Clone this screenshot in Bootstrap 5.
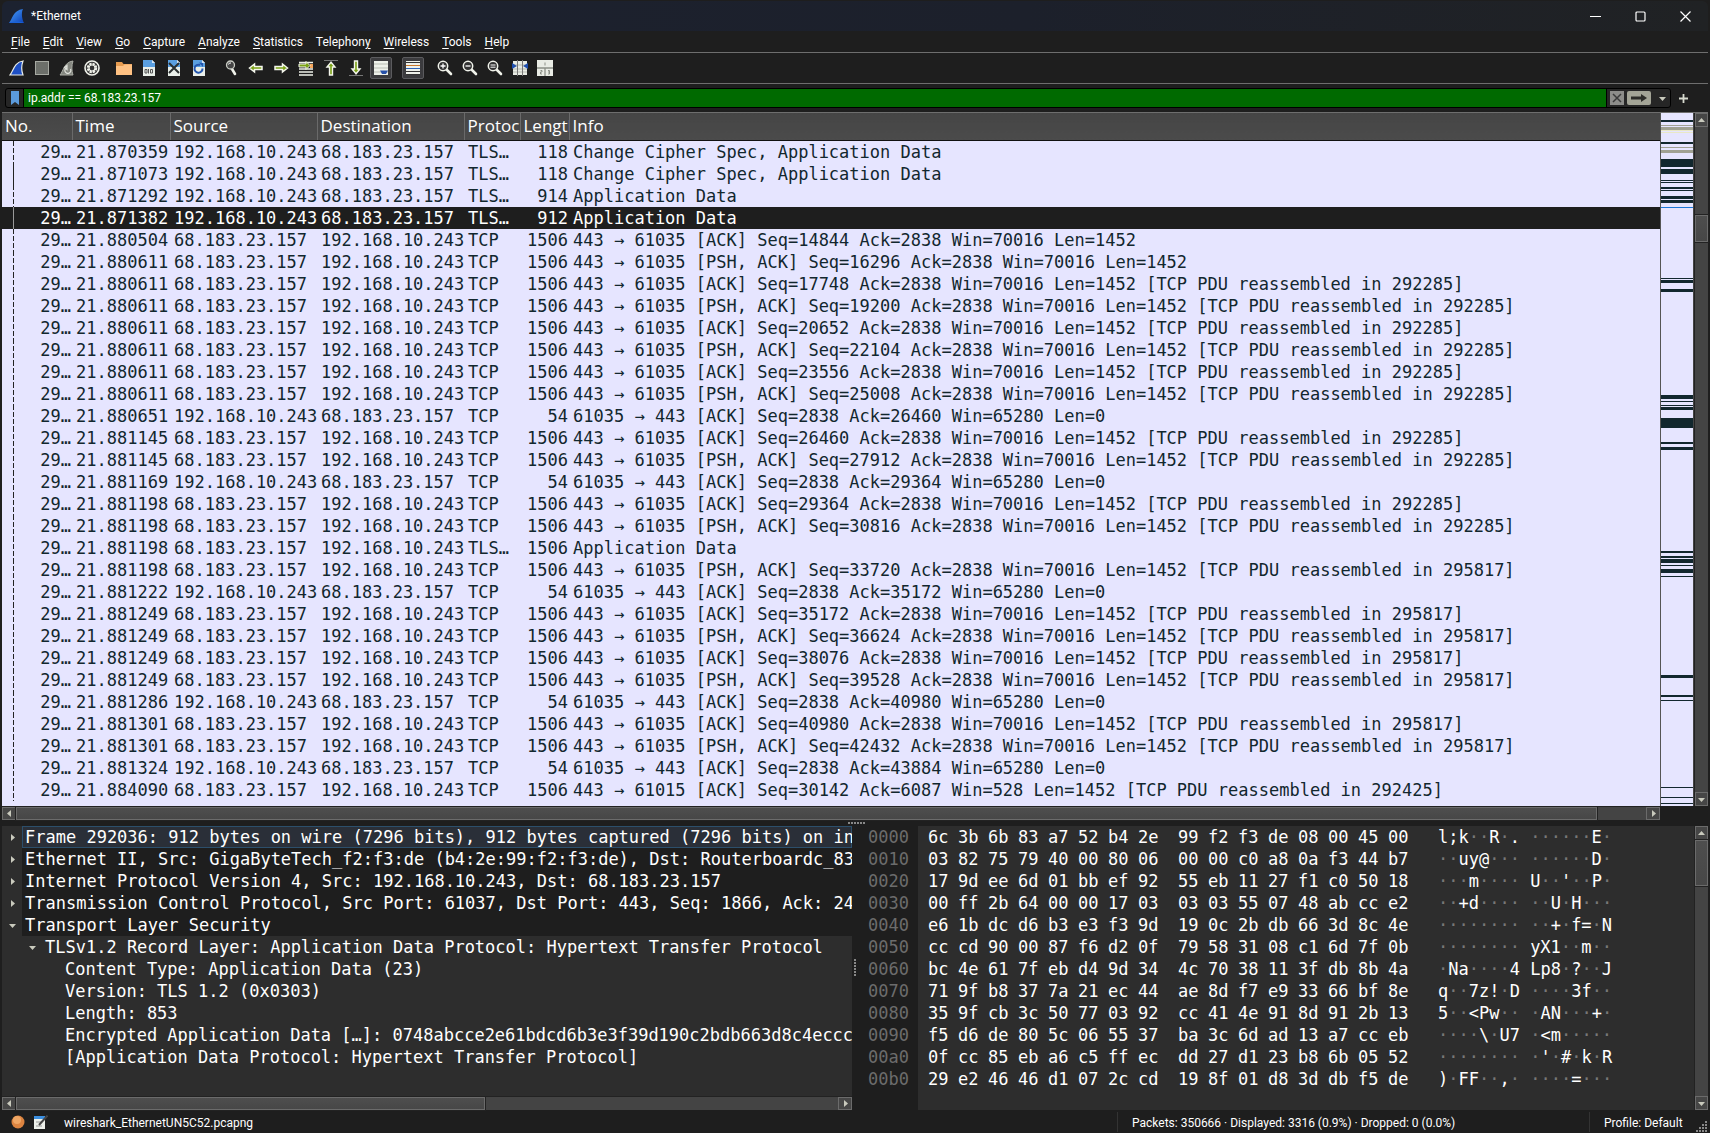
<!DOCTYPE html>
<html lang="en">
<head>
<meta charset="utf-8">
<meta name="viewport" content="width=device-width, initial-scale=1">
<title>*Ethernet</title>
<link href="https://cdn.jsdelivr.net/npm/bootstrap@5.3.0/dist/css/bootstrap.min.css" rel="stylesheet">
<style>
:root{--ui:Roboto,"Open Sans",sans-serif;--fixed:"DejaVu Sans Mono","Liberation Mono",monospace;--panel:#2d2d2d;--chrome:#1e1e1e;--ink:#12272e;--list:#e6e5ff}
body{font-family:var(--ui);font-size:12px;line-height:16px;color:#fff;background:#2c2e31;overflow:hidden}
button{font:inherit;color:inherit}
.app{height:100vh;padding:1px 2px 0;background:var(--chrome)}
.titlebar{height:30px;background:linear-gradient(90deg,#1c2230,#1c202b 60%,#202224);border-radius:6px 6px 0 0;padding-left:7px}
.titlebar .caption-text{margin-left:6px;flex:1}
.win-btn{width:45px;height:30px;background:none;border:0;padding:0;display:grid;place-items:center}
.menus{height:21px;padding-left:3px}
.menus a{color:#fff;text-decoration:none;padding:3px 7px 2px 6px}
.menus u{text-underline-offset:2px}
.tools{height:31px;border-top:1px solid #6e6e6e;padding-left:2px;gap:7px}
.tools .grp{display:flex}
.tool{width:25px;height:24px;padding:0;border:0;background:none;display:grid;place-items:center}
.tool.on svg{box-sizing:content-box;padding:2px;background:#3b3b3e;border:1px solid #5b5b5e;border-radius:2px}
.filter{height:30px;border-top:1px solid #6e6e6e;border-bottom:1px solid #6e6e6e;padding-left:3px;padding-right:13px}
.fbox{height:20px;flex:1;border:1px solid #000;border-radius:3px;background:#262626;display:flex;align-items:center;min-width:0}
.fbox input{flex:1;min-width:0;height:18px;border:0;border-left:1px solid #000;border-right:1px solid #000;background:#006a00;color:#fff;font-size:12px;padding:0 4px;outline:0}
.fbtn{border:0;padding:0;background:none;display:grid;place-items:center}
.bm{width:17px}
.clr{width:14px;height:14px;background:#8d8d8a;margin-left:3px}
.apply{width:24px;height:14px;background:#a3a496;border-radius:2px;margin:0 3px}
.drop{width:16px}
.plus{width:24px;flex:none}
.packets{flex:1 1 0;min-height:0;color:var(--ink)}
.list{flex:1;min-width:0;overflow:hidden;background:var(--list)}
.pk{table-layout:fixed;width:100%;border-collapse:collapse;font:17px/22px var(--fixed)}
.pk th{height:27px;background:linear-gradient(#454545,#4b4b4b);border-right:1px solid #6a6a6a;border-bottom:1px solid #111;color:#fff;font:17px/26px "Open Sans",sans-serif;padding:0 0 0 3px;white-space:nowrap;overflow:hidden}
.pk th:last-child{border-right:0}
.pk td{height:22px;padding:0 1px 0 4px;white-space:pre;overflow:hidden}
.pk .num{text-align:right}
.pk .flow{background:linear-gradient(#222,#222) 11px 0/1px 100% no-repeat}
.pk .gap .flow{background:repeating-linear-gradient(#222 0 5px,transparent 5px 7px) 11px 0/1px 100% no-repeat}
.pk tr.sel{background:var(--chrome);color:#fff}
.pk tr.sel .flow{background-image:linear-gradient(#999,#999)}
.c-no{width:70px}.c-time{width:98px}.c-addr{width:147px}.c-proto{width:56px}.c-len{width:49px}
.map{width:34px;border-left:1px solid #555;border-right:1px solid #444;background:var(--list)}
.map svg{display:block;width:100%;height:100%}
.sb{background:#444;border:1px solid #222;flex:none;display:flex}
.sb.v{width:14px;flex-direction:column;border-width:0 0 0 1px}
.sb.h{height:14px;border-width:1px 0 0}
.sb button{border:1px solid #6b6b6b;background:#464646;padding:0;flex:none;display:grid;place-items:center}
.sb.v button{width:13px;height:14px}
.sb.h button{width:14px;height:13px}
.sb .track{flex:1;display:flex;min-width:0;min-height:0}
.sb.v .track{flex-direction:column}
.thumb{background:linear-gradient(#4e4e4e,#474747);border:1px solid #6b6b6b;box-shadow:0 0 0 1px #222}
.t-list-v{height:27px;margin-top:88px}.t-hex-v{height:46px}
.t-list-h{width:97%}.t-tree-h{width:57%}
.corner{width:48px}
.split{height:6px;padding-left:846px}
.dots{width:18px;height:2px;background:repeating-linear-gradient(90deg,#888 0 2px,transparent 2px 3px)}
.lower{height:284px}
.tree{width:850px;flex:none;background:var(--panel);font:17px/22px var(--fixed)}
.tree ul{list-style:none;margin:0;padding:0;flex:1;overflow:hidden}
.tree li{height:22px;display:flex;white-space:pre}
.tree .tw{width:20px;flex:none;display:grid;place-items:center}
.tree .txt{flex:1;min-width:0;overflow:hidden;padding-left:3px}
.tree .top .txt{background:var(--chrome)}
.tree .cur .txt{background:#2a2f38;box-shadow:inset 0 0 0 1px #2c4f6b}
.tree .l2{padding-left:20px}.tree .l3{padding-left:40px}
.vsplit{width:6px;flex:none}
.vsplit .dots{width:2px;height:18px;background:repeating-linear-gradient(#888 0 2px,transparent 2px 3px)}
.hex{flex:1;min-width:0;background:linear-gradient(90deg,#1e1e1e 60px,var(--panel) 60px);overflow:hidden}
.hx{table-layout:fixed;border-collapse:collapse;font:17px/22px var(--fixed);width:760px}
.hx td,.hx th{padding:0;height:22px;white-space:pre;font-weight:400}
.hx .off{width:70px;padding-left:10px;color:#6c6c6c}
.hx .by{width:30px}.hx .mid{width:40px}
.hx .asc{padding-left:20px}
.hx i{font-style:normal;color:#777}
.status{height:23px}
.status .ico{margin-left:9px}
.status .cap{margin-left:16px;margin-top:2px}
.stat-a,.stat-b{border-left:1px solid #333;padding-left:14px;padding-top:3px;height:20px}
.stat-a{width:472px}.stat-b{width:119px;position:relative}
.grip{position:absolute;right:0;bottom:0}
</style>
</head>
<body>
<svg width="0" height="0" class="position-absolute" aria-hidden="true">
<defs>
<linearGradient id="gfin" x1="0" x2="1" y1="0" y2="1"><stop offset="0" stop-color="#4aa3ff"/><stop offset="1" stop-color="#0b3fb5"/></linearGradient>
<symbol id="up" viewBox="0 0 7 7"><path d="M0 5 3.500 1 7 5z" fill="#c9cabd"/></symbol>
<symbol id="dn" viewBox="0 0 7 7"><path d="M0 2h7L3.500 6z" fill="#c9cabd"/></symbol>
<symbol id="lf" viewBox="0 0 7 7"><path d="M5 0v7L1 3.500z" fill="#c9cabd"/></symbol>
<symbol id="rt" viewBox="0 0 7 7"><path d="M2 0v7l4-3.500z" fill="#c9cabd"/></symbol>
<symbol id="doc" viewBox="0 0 16 16"><path d="M2 0h9l3 3v13H2z" fill="#e9efe9"/><path d="M2 0h9v3h3v4H2z" fill="#5a9fe0"/><path d="M11 0v3h3z" fill="#d5e6f5"/></symbol>
<symbol id="glass" viewBox="0 0 16 16"><path d="m9 9 5 5" stroke="#f0f2ea" stroke-width="2.600" stroke-linecap="round"/><circle cx="6" cy="6" r="4.700" fill="#333" stroke="#f0f2ea" stroke-width="1.500"/></symbol>
<symbol id="arr" viewBox="0 0 16 16"><path d="M14.500 8 9.500 4v2.500H2v3h7.500V12z" fill="#7aa116" stroke="#f4f6ec" stroke-width="1.500"/></symbol>
</defs>
</svg>
<div class="app d-flex flex-column">
  <header class="titlebar d-flex align-items-center">
    <svg width="16" height="16" viewBox="0 0 16 16"><path d="M0 15C3 12 4 2 14 1c-2 4-1 10 1 14z" fill="url(#gfin)"/><path d="M0 15c4-2 11-2 15 0z" fill="#1b62d8"/></svg>
    <span class="caption-text">*Ethernet</span>
    <button class="win-btn" aria-label="Minimize"><svg width="11" height="11"><path d="M0 5.500h11" stroke="#fff"/></svg></button>
    <button class="win-btn" aria-label="Maximize"><svg width="11" height="11"><rect x="1" y="1" width="9" height="9" rx="1" fill="none" stroke="#fff" stroke-width="1.200"/></svg></button>
    <button class="win-btn" aria-label="Close"><svg width="11" height="11"><path d="m.5.5 10 10m0-10-10 10" stroke="#fff" stroke-width="1.200"/></svg></button>
  </header>
  <nav class="menus d-flex align-items-center">
    <a href="#"><u>F</u>ile</a><a href="#"><u>E</u>dit</a><a href="#"><u>V</u>iew</a><a href="#"><u>G</u>o</a><a href="#"><u>C</u>apture</a><a href="#"><u>A</u>nalyze</a><a href="#"><u>S</u>tatistics</a><a href="#">Telephon<u>y</u></a><a href="#"><u>W</u>ireless</a><a href="#"><u>T</u>ools</a><a href="#"><u>H</u>elp</a>
  </nav>
  <div class="tools d-flex align-items-center" role="toolbar">
    <div class="grp">
      <button class="tool" aria-label="Start capture"><svg width="16" height="16"><path d="M1 15C4 12 5 2 14 1c-1.500 4-1.500 10 0 14z" fill="#1d4fc4" stroke="#e8ece6" stroke-width="1.200"/></svg></button>
      <button class="tool" aria-label="Stop capture"><svg width="16" height="16"><rect x="1.500" y="1.500" width="13" height="13" fill="#6c6f6a" stroke="#a6a9a2"/></svg></button>
      <button class="tool" aria-label="Restart capture"><svg width="16" height="16"><path d="M1 15C4 12 5 2 14 1c-1.500 4-1.500 10 0 14z" fill="#83867f" stroke="#a9aca4"/><path d="M8 7.500a3 3 0 1 0 3.500 1.500M8 5.500v4l-2.500-2z" fill="none" stroke="#e0e2dc" stroke-width="1.200"/></svg></button>
      <button class="tool" aria-label="Capture options"><svg width="16" height="16"><circle cx="8" cy="8" r="7" fill="#333" stroke="#f0f2ea" stroke-width="1.600"/><circle cx="8" cy="8" r="4.200" fill="none" stroke="#f0f2ea" stroke-width="2" stroke-dasharray="2.400 .9"/><circle cx="8" cy="8" r="3" fill="none" stroke="#f0f2ea" stroke-width="1.200"/></svg></button>
    </div>
    <div class="grp">
      <button class="tool" aria-label="Open"><svg width="16" height="16"><path d="M0 2h6l1.500 2H16v11H0z" fill="#e79c50"/><path d="M0 6h7l1.500-1.500H16V15H0z" fill="#ffc283"/></svg></button>
      <button class="tool" aria-label="Save"><svg width="16" height="16"><use href="#doc"/><path d="M4 9.500h2v3.500H4zM7.500 9v4.500M9.500 9.500h2v3.500h-2z" fill="none" stroke="#555"/></svg></button>
      <button class="tool" aria-label="Close file"><svg width="16" height="16"><use href="#doc"/><path d="m3 3 10 10m0-10L3 13" stroke="#2a2f2f" stroke-width="2"/></svg></button>
      <button class="tool" aria-label="Reload"><svg width="16" height="16"><use href="#doc"/><path d="M11.500 8.500A4 4 0 1 1 9 5" fill="none" stroke="#2456ad" stroke-width="2"/><path d="M8 2.500 12 3v4z" fill="#2456ad"/></svg></button>
    </div>
    <div class="grp">
      <button class="tool" aria-label="Find"><svg width="16" height="16"><path d="m9 9 3 5" stroke="#f0f2ea" stroke-width="2.600" stroke-linecap="round"/><circle cx="7.500" cy="5" r="4" fill="#444" stroke="#c9ccc4" stroke-width="1.300"/><path d="M5.500 4.500A2 2 0 0 1 8 3" stroke="#fff" fill="none"/></svg></button>
      <button class="tool" aria-label="Back"><svg width="16" height="16"><use href="#arr" transform="matrix(-1 0 0 1 16 0)"/></svg></button>
      <button class="tool" aria-label="Forward"><svg width="16" height="16"><use href="#arr"/></svg></button>
      <button class="tool" aria-label="Go to packet"><svg width="16" height="16"><path d="M1 2.500h14M1 9h14M1 12h14M1 15h14" stroke="#f0f2ea" stroke-width="1.700"/><path d="M12 4h3v4h-3z" fill="#f5a65b"/><path d="M12 5.500 8 1.500v2.500H1v3h7v2.500z" fill="#7aa116" stroke="#f4f6ec"/></svg></button>
      <button class="tool" aria-label="First packet"><svg width="16" height="16"><path d="M1 .5h14" stroke="#777"/><path d="M8 2.200 4 7h2.500v8h3V7H12z" fill="#7aa116" stroke="#f4f6ec" stroke-width="1.400"/></svg></button>
      <button class="tool" aria-label="Last packet"><svg width="16" height="16"><path d="M1 15.500h14" stroke="#777"/><path d="M8 13.800 4 9h2.500V1h3v8H12z" fill="#7aa116" stroke="#f4f6ec" stroke-width="1.400"/></svg></button>
      <button class="tool on" aria-label="Auto scroll"><svg width="16" height="16"><path d="M1 1h14v14H1z" fill="#eef1ea"/><path d="M1 4h14M1 8h14M1 12h14" stroke="#b9bdb4"/><path d="M7 10.500h8L13 14H9z" fill="#2650a8"/></svg></button>
    </div>
    <div class="grp">
      <button class="tool on" aria-label="Colorize"><svg width="16" height="16"><path d="M1 1h14v14H1z" fill="#eef1ea"/><path d="M1 2.500h14M1 11.500h14M1 14.500h14" stroke="#333"/><path d="M1 5.500h14" stroke="#c9772b"/><path d="M1 8.500h14" stroke="#2c62b5"/></svg></button>
    </div>
    <div class="grp">
      <button class="tool" aria-label="Zoom in"><svg width="16" height="16"><use href="#glass"/><path d="M3.500 6h5M6 3.500v5" stroke="#fff" stroke-width="1.300"/></svg></button>
      <button class="tool" aria-label="Zoom out"><svg width="16" height="16"><use href="#glass"/><path d="M3.500 6h5" stroke="#fff" stroke-width="1.300"/></svg></button>
      <button class="tool" aria-label="Normal size"><svg width="16" height="16"><use href="#glass"/><path d="M3.500 5h5M3.500 7.200h5" stroke="#fff"/></svg></button>
      <button class="tool" aria-label="Resize columns"><svg width="16" height="16"><path d="M1 1h14v14H1z" fill="#e9ece5"/><path d="M1 5h14M1 9h14M1 12h14" stroke="#b5b9b0"/><path d="M5.500 0v16M10.500 0v16" stroke="#777"/><path d="m0 3 5 3-5 3zM16 3l-5 3 5 3z" fill="#1f4fae"/></svg></button>
      <button class="tool" aria-label="Layout"><svg width="16" height="16"><path d="M0 0h16v16H0z" fill="#e9ece5"/><path d="M0 8h16M8 8v8" stroke="#8b8f87" stroke-width="1.300"/><path d="M8 2.500v3M3.500 10.500h1.500v1.500H3.500v2H5M11 10.500h1.500v3.500H11M11 12h1.500" fill="none" stroke="#8b8f87"/></svg></button>
    </div>
  </div>
  <div class="filter d-flex align-items-center">
    <div class="fbox">
      <button class="fbtn bm" aria-label="Bookmark"><svg width="8" height="14"><path d="M0 0h8v14l-4-3-4 3z" fill="#5b9bdc"/></svg></button>
      <input type="text" aria-label="Display filter" value="ip.addr == 68.183.23.157">
      <button class="fbtn clr" aria-label="Clear"><svg width="10" height="10"><path d="m1 1 8 8m0-8L1 9" stroke="#3a3a3a" stroke-width="1.500"/></svg></button>
      <button class="fbtn apply" aria-label="Apply"><svg width="16" height="8"><path d="M0 2.500h10V0l6 4-6 4V5.500H0z" fill="#2c2c28"/></svg></button>
      <button class="fbtn drop" aria-label="History"><svg width="7" height="7"><use href="#dn"/></svg></button>
    </div>
    <button class="fbtn plus" aria-label="Add filter button"><svg width="9" height="9"><path d="M4.500 0v9M0 4.500h9" stroke="#d7dacf" stroke-width="1.800"/></svg></button>
  </div>
  <main class="packets d-flex">
    <div class="list">
      <table class="pk">
        <colgroup><col class="c-no"><col class="c-time"><col class="c-addr"><col class="c-addr"><col class="c-proto"><col class="c-len"><col></colgroup>
        <thead><tr><th>No.</th><th>Time</th><th>Source</th><th>Destination</th><th>Protoc</th><th>Lengtl</th><th>Info</th></tr></thead>
        <tbody id="packets"></tbody>
      </table>
    </div>
    <div class="map"><svg id="minimap" viewBox="0 0 32 693" preserveAspectRatio="none" shape-rendering="crispEdges"></svg></div>
    <div class="sb v"><button aria-label="Scroll up"><svg width="7" height="7"><use href="#up"/></svg></button><div class="track"><div class="thumb t-list-v"></div></div><button aria-label="Scroll down"><svg width="7" height="7"><use href="#dn"/></svg></button></div>
  </main>
  <div class="d-flex">
    <div class="sb h flex-fill"><button aria-label="Scroll left"><svg width="7" height="7"><use href="#lf"/></svg></button><div class="track"><div class="thumb t-list-h"></div></div><button aria-label="Scroll right"><svg width="7" height="7"><use href="#rt"/></svg></button></div>
    <div class="corner"></div>
  </div>
  <div class="split d-flex align-items-center"><div class="dots"></div></div>
  <section class="lower d-flex">
    <div class="tree d-flex flex-column">
      <ul>
        <li class="top cur"><span class="tw"><svg width="7" height="7"><use href="#rt"/></svg></span><span class="txt">Frame 292036: 912 bytes on wire (7296 bits), 912 bytes captured (7296 bits) on inte</span></li>
        <li class="top"><span class="tw"><svg width="7" height="7"><use href="#rt"/></svg></span><span class="txt">Ethernet II, Src: GigaByteTech_f2:f3:de (b4:2e:99:f2:f3:de), Dst: Routerboardc_83:a</span></li>
        <li class="top"><span class="tw"><svg width="7" height="7"><use href="#rt"/></svg></span><span class="txt">Internet Protocol Version 4, Src: 192.168.10.243, Dst: 68.183.23.157</span></li>
        <li class="top"><span class="tw"><svg width="7" height="7"><use href="#rt"/></svg></span><span class="txt">Transmission Control Protocol, Src Port: 61037, Dst Port: 443, Seq: 1866, Ack: 2464</span></li>
        <li class="top"><span class="tw"><svg width="7" height="7"><use href="#dn"/></svg></span><span class="txt">Transport Layer Security</span></li>
        <li class="l2"><span class="tw"><svg width="7" height="7"><use href="#dn"/></svg></span><span class="txt">TLSv1.2 Record Layer: Application Data Protocol: Hypertext Transfer Protocol</span></li>
        <li class="l3"><span class="tw"></span><span class="txt">Content Type: Application Data (23)</span></li>
        <li class="l3"><span class="tw"></span><span class="txt">Version: TLS 1.2 (0x0303)</span></li>
        <li class="l3"><span class="tw"></span><span class="txt">Length: 853</span></li>
        <li class="l3"><span class="tw"></span><span class="txt">Encrypted Application Data […]: 0748abcce2e61bdcd6b3e3f39d190c2bdb663d8c4ecccd9</span></li>
        <li class="l3"><span class="tw"></span><span class="txt">[Application Data Protocol: Hypertext Transfer Protocol]</span></li>
      </ul>
      <div class="sb h"><button aria-label="Scroll left"><svg width="7" height="7"><use href="#lf"/></svg></button><div class="track"><div class="thumb t-tree-h"></div></div><button aria-label="Scroll right"><svg width="7" height="7"><use href="#rt"/></svg></button></div>
    </div>
    <div class="vsplit d-flex align-items-center justify-content-center"><div class="dots"></div></div>
    <div class="hex"><table class="hx"><tbody id="bytes"></tbody></table></div>
    <div class="sb v"><button aria-label="Scroll up"><svg width="7" height="7"><use href="#up"/></svg></button><div class="track"><div class="thumb t-hex-v"></div></div><button aria-label="Scroll down"><svg width="7" height="7"><use href="#dn"/></svg></button></div>
  </section>
  <footer class="status d-flex align-items-center">
    <svg class="ico" width="14" height="14"><circle cx="7" cy="7" r="6.500" fill="#dd8440"/><circle cx="6" cy="5" r="4" fill="#f0a765"/></svg>
    <svg class="ico" width="14" height="14"><path d="M0 1h11v13H0z" fill="#edf0ea"/><path d="M0 1h11v3H0z" fill="#3c8fe0"/><path d="M2 7h6M2 11h6" stroke="#999"/><path d="M13.500.5 5 10" stroke="#444" stroke-width="2"/></svg>
    <span class="cap flex-fill">wireshark_EthernetUN5C52.pcapng</span>
    <span class="stat-a">Packets: 350666 · Displayed: 3316 (0.9%) · Dropped: 0 (0.0%)</span>
    <span class="stat-b">Profile: Default
      <svg class="grip" width="12" height="12"><path d="M9 2h2M6 5h5M3 8h8M0 11h11" stroke="#888" stroke-width="2" stroke-dasharray="2 1"/></svg>
    </span>
  </footer>
</div>
<script src="https://cdn.jsdelivr.net/npm/bootstrap@5.3.0/dist/js/bootstrap.bundle.min.js"></script>
<script>
const local = '192.168.10.243', remote = '68.183.23.157';
// time, direction (o = outgoing, i = incoming), length, info
const app = 'Application Data';
const seg = (flags, seq, re, tail = 'Ack=2838 Win=70016 Len=1452', port = 61035) =>
  `443 → ${port} [${flags}] Seq=${seq} ${tail}` + (re ? ` [TCP PDU reassembled in ${re}]` : '');
const ack = n => `61035 → 443 [ACK] Seq=2838 Ack=${n} Win=65280 Len=0`;
const rows = [
  ['21.870359','o',118,'Change Cipher Spec, ' + app],
  ['21.871073','o',118,'Change Cipher Spec, ' + app],
  ['21.871292','o',914,app],
  ['21.871382','o',912,app],
  ['21.880504','i',1506,seg('ACK',14844)],
  ['21.880611','i',1506,seg('PSH, ACK',16296)],
  ['21.880611','i',1506,seg('ACK',17748,292285)],
  ['21.880611','i',1506,seg('PSH, ACK',19200,292285)],
  ['21.880611','i',1506,seg('ACK',20652,292285)],
  ['21.880611','i',1506,seg('PSH, ACK',22104,292285)],
  ['21.880611','i',1506,seg('ACK',23556,292285)],
  ['21.880611','i',1506,seg('PSH, ACK',25008,292285)],
  ['21.880651','o',54,ack(26460)],
  ['21.881145','i',1506,seg('ACK',26460,292285)],
  ['21.881145','i',1506,seg('PSH, ACK',27912,292285)],
  ['21.881169','o',54,ack(29364)],
  ['21.881198','i',1506,seg('ACK',29364,292285)],
  ['21.881198','i',1506,seg('PSH, ACK',30816,292285)],
  ['21.881198','i',1506,app],
  ['21.881198','i',1506,seg('PSH, ACK',33720,295817)],
  ['21.881222','o',54,ack(35172)],
  ['21.881249','i',1506,seg('ACK',35172,295817)],
  ['21.881249','i',1506,seg('PSH, ACK',36624,295817)],
  ['21.881249','i',1506,seg('ACK',38076,295817)],
  ['21.881249','i',1506,seg('PSH, ACK',39528,295817)],
  ['21.881286','o',54,ack(40980)],
  ['21.881301','i',1506,seg('ACK',40980,295817)],
  ['21.881301','i',1506,seg('PSH, ACK',42432,295817)],
  ['21.881324','o',54,ack(43884)],
  ['21.884090','i',1506,seg('ACK',30142,292425,'Ack=6087 Win=528 Len=1452',61015)]
];
document.getElementById('packets').innerHTML = rows.map(([t, d, len, info], i) => {
  const tls = info.endsWith(app);
  const cls = i === 3 ? 'sel' : (i === 1 ? '' : 'gap');
  return `<tr class="${cls}"><td class="num flow">29…</td><td>${t}</td><td>${d === 'o' ? local : remote}</td><td>${d === 'o' ? remote : local}</td><td>${tls ? 'TLS…' : 'TCP'}</td><td class="num">${len}</td><td>${info}</td></tr>`;
}).join('');

// bands of the overview strip: top, height, colour
const dark = '#12272e', grey = '#a0a193', pale = '#e9e8c6';
const bands = [[7,2],[12,1,grey],[14,3,grey],[17,1,pale],[19,1,pale],[29,2],[34,1,grey],[37,3,grey],[46,8],[56,5],[67,1],[69,1],[74,2],[77,1],[83,3],[87,3],[94,1,'#1b77d8'],
  [165,1],[167,3],[176,3],[282,4],[288,1],[292,1],[294,3],[305,10],[329,2],[334,3],[438,2],[443,2],[446,4],[452,1],[456,4],[463,1],[562,3],[582,2],[587,1],[674,1],[684,1],[690,1]];
document.getElementById('minimap').innerHTML = bands.map(([y, h, c]) => `<rect x="0" y="${y}" width="32" height="${h}" fill="${c || dark}"/>`).join('');

const dump = [
  ['6c 3b 6b 83 a7 52 b4 2e 99 f2 f3 de 08 00 45 00','l;k··R·. ······E·'],
  ['03 82 75 79 40 00 80 06 00 00 c0 a8 0a f3 44 b7','··uy@··· ······D·'],
  ['17 9d ee 6d 01 bb ef 92 55 eb 11 27 f1 c0 50 18',"···m···· U··'··P·"],
  ['00 ff 2b 64 00 00 17 03 03 03 55 07 48 ab cc e2','··+d···· ··U·H···'],
  ['e6 1b dc d6 b3 e3 f3 9d 19 0c 2b db 66 3d 8c 4e','········ ··+·f=·N'],
  ['cc cd 90 00 87 f6 d2 0f 79 58 31 08 c1 6d 7f 0b','········ yX1··m··'],
  ['bc 4e 61 7f eb d4 9d 34 4c 70 38 11 3f db 8b 4a','·Na····4 Lp8·?··J'],
  ['71 9f b8 37 7a 21 ec 44 ae 8d f7 e9 33 66 bf 8e','q··7z!·D ····3f··'],
  ['35 9f cb 3c 50 77 03 92 cc 41 4e 91 8d 91 2b 13','5··<Pw·· ·AN···+·'],
  ['f5 d6 de 80 5c 06 55 37 ba 3c 6d ad 13 a7 cc eb','····\\·U7 ·<m·····'],
  ['0f cc 85 eb a6 c5 ff ec dd 27 d1 23 b8 6b 05 52',"········ ·'·#·k·R"],
  ['29 e2 46 46 d1 07 2c cd 19 8f 01 d8 3d db f5 de',')·FF··,· ····=···']
];
document.getElementById('bytes').innerHTML = dump.map(([hex, asc], i) => {
  const off = '00' + i.toString(16) + '0';
  const cells = hex.split(' ').map((b, k) => `<td class="${k === 7 ? 'mid' : 'by'}">${b}</td>`).join('');
  const text = asc.replace(/</g, '&lt;').replace(/·+/g, m => `<i>${m}</i>`);
  return `<tr><th class="off" scope="row">${off}</th>${cells}<td class="asc">${text}</td></tr>`;
}).join('');
</script>
</body>
</html>
